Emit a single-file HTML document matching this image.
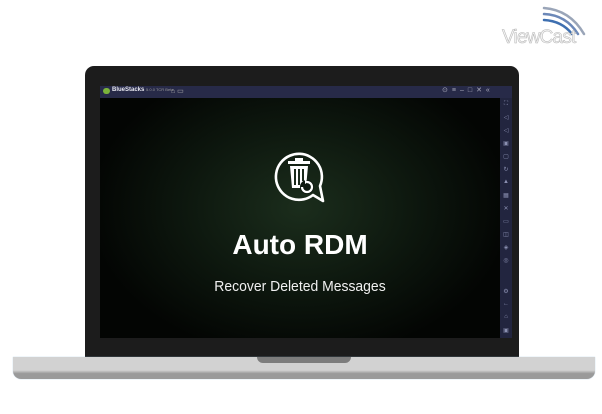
<!DOCTYPE html>
<html><head><style>
*{margin:0;padding:0;box-sizing:border-box}
body{width:602px;height:414px;background:#fff;position:relative;overflow:hidden;font-family:"Liberation Sans",sans-serif}
.lid{position:absolute;left:85px;top:66px;width:434px;height:292px;background:#1c1c1c;border-radius:9px 9px 0 0}
.scr{position:absolute;left:100px;top:98px;width:400px;height:240px;background:radial-gradient(ellipse 210px 150px at 200px 110px,#1b2d1c 0%,#0d170e 55%,#030503 100%)}
.tb{position:absolute;left:100px;top:86px;width:412px;height:12px;background:#272a48}
.sb{position:absolute;left:500px;top:98px;width:12px;height:240px;background:#22253f}
.base{position:absolute;left:13px;top:357px;width:582px;height:22px;border-radius:0 0 8px 8px;background:linear-gradient(#d2d2d2 0,#d2d2d2 60%,#9a9a9a 75%,#9a9a9a 100%);box-shadow:0 0 1px #9fc0dc}
.notch{position:absolute;left:257px;top:357px;width:94px;height:6px;background:#7d7d7d;border-radius:0 0 8px 8px}
.t1{position:absolute;left:100px;width:400px;text-align:center;color:#fff}
.ic{position:absolute;left:500px;width:12px;text-align:center;color:#8a8fb0;font-size:6px}
</style></head><body>
<svg style="position:absolute;left:540px;top:4px" width="50" height="32" viewBox="0 0 50 32"><g fill="none" stroke-linecap="round" stroke-width="2.5"><path d="M4 4 Q30 6 44 30" stroke="#9aa5b8"/><path d="M4 10 Q26 11 38 30" stroke="#6c88b8"/><path d="M4 16 Q22 17 32 30" stroke="#3e6fb0"/></g></svg>
<div style="position:absolute;left:502px;top:27px;font-size:19px;color:#f2f2f2;letter-spacing:-0.8px;-webkit-text-stroke:0.5px #b5b5b5">ViewCast</div>
<div class="lid"></div>
<div class="tb"></div>
<div class="scr"></div>
<div class="sb"></div>
<div style="position:absolute;left:103px;top:88px;width:7px;height:6px;background:#7bb33b;border-radius:3px"></div>
<div style="position:absolute;left:112px;top:87px;font-size:6px;color:#e8e8f0;font-weight:bold">BlueStacks <span style="font-weight:normal;font-size:4px;color:#999">5.0.0 TCR Beta</span></div>
<div style="position:absolute;left:171px;top:87px;font-size:7px;color:#aaa">⌂ ▭</div>
<div style="position:absolute;left:442px;top:86px;font-size:7px;color:#aab;letter-spacing:4px">⊙≡–□✕«</div>
<div class="ic" style="top:101px">⛶</div>
<div class="ic" style="top:114px">◁</div><div class="ic" style="top:127px">◁</div><div class="ic" style="top:140px">▣</div>
<div class="ic" style="top:153px">▢</div><div class="ic" style="top:166px">↻</div><div class="ic" style="top:179px">▲</div>
<div class="ic" style="top:192px">▦</div><div class="ic" style="top:205px">✕</div><div class="ic" style="top:218px">▭</div>
<div class="ic" style="top:231px">◫</div><div class="ic" style="top:244px">◈</div><div class="ic" style="top:257px">◎</div>
<div class="ic" style="top:288px">⚙</div><div class="ic" style="top:301px">←</div><div class="ic" style="top:314px">⌂</div><div class="ic" style="top:327px">▣</div>
<svg style="position:absolute;left:270px;top:146px" width="60" height="60" viewBox="0 0 60 60">
<path d="M43 49 A23 23 0 1 1 50 40 L53 55 Z" fill="none" stroke="#fff" stroke-width="2.6" stroke-linejoin="round"/>
<rect x="18" y="15" width="22" height="3" fill="#fff"/><rect x="25" y="12" width="8" height="3" fill="#fff"/>
<path d="M20 20 H38 L36 42 H22 Z" fill="#fff"/>
<rect x="24" y="23" width="2" height="16" fill="#1a2a1b"/><rect x="28" y="23" width="2" height="16" fill="#1a2a1b"/><rect x="32" y="23" width="2" height="12" fill="#1a2a1b"/>
<circle cx="37" cy="41" r="7" fill="#0f1a10"/><path d="M32 41 A5 5 0 1 0 37 36" fill="none" stroke="#fff" stroke-width="2.2"/><path d="M35 33 L38 36 L35 38" fill="#fff"/>
</svg>
<div class="t1" style="top:229px;font-size:28px;font-weight:bold">Auto RDM</div>
<div class="t1" style="top:278px;font-size:15px;color:#f0f0f0;transform:scaleX(0.93)">Recover Deleted Messages</div>
<div class="base"></div>
<div class="notch"></div>
</body></html>
